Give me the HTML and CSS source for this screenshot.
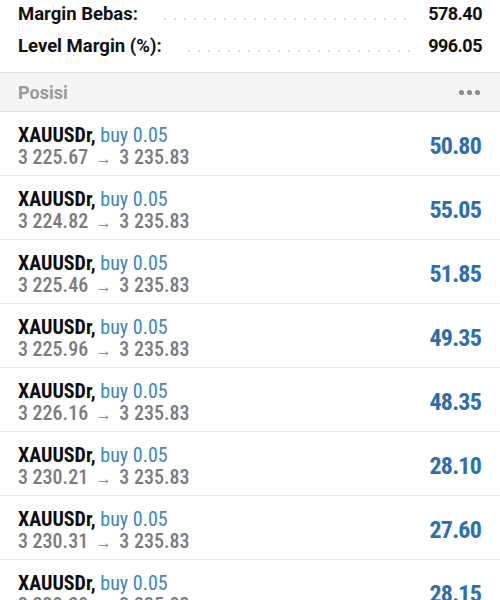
FILE: index.html
```html
<!DOCTYPE html>
<html lang="id">
  <head>
    <meta charset="utf-8" />
    <title>Posisi</title>
    <link rel="stylesheet" href="styles.css">
  </head>
  <body>
    <div class="summary">
      <div class="sum-row">
        <span class="sum-label">Margin Bebas:</span>
        <span class="sum-dots"></span>
        <span class="sum-value">578.40</span>
      </div>
      <div class="sum-row">
        <span class="sum-label">Level Margin (%):</span>
        <span class="sum-dots"></span>
        <span class="sum-value">996.05</span>
      </div>
    </div>

    <div class="section-head">
      <span class="section-title">Posisi</span>
      <span class="more"><i></i><i></i><i></i></span>
    </div>

    <div class="positions">
      <div class="pos">
        <div class="pos-info">
          <div class="pos-title"><b>XAUUSDr,</b> <span class="side">buy 0.05</span></div>
          <div class="pos-price">3 225.67 <span class="arrow">&rarr;</span> 3 235.83</div>
        </div>
        <div class="pos-profit">50.80</div>
      </div>
      <div class="pos">
        <div class="pos-info">
          <div class="pos-title"><b>XAUUSDr,</b> <span class="side">buy 0.05</span></div>
          <div class="pos-price">3 224.82 <span class="arrow">&rarr;</span> 3 235.83</div>
        </div>
        <div class="pos-profit">55.05</div>
      </div>
      <div class="pos">
        <div class="pos-info">
          <div class="pos-title"><b>XAUUSDr,</b> <span class="side">buy 0.05</span></div>
          <div class="pos-price">3 225.46 <span class="arrow">&rarr;</span> 3 235.83</div>
        </div>
        <div class="pos-profit">51.85</div>
      </div>
      <div class="pos">
        <div class="pos-info">
          <div class="pos-title"><b>XAUUSDr,</b> <span class="side">buy 0.05</span></div>
          <div class="pos-price">3 225.96 <span class="arrow">&rarr;</span> 3 235.83</div>
        </div>
        <div class="pos-profit">49.35</div>
      </div>
      <div class="pos">
        <div class="pos-info">
          <div class="pos-title"><b>XAUUSDr,</b> <span class="side">buy 0.05</span></div>
          <div class="pos-price">3 226.16 <span class="arrow">&rarr;</span> 3 235.83</div>
        </div>
        <div class="pos-profit">48.35</div>
      </div>
      <div class="pos">
        <div class="pos-info">
          <div class="pos-title"><b>XAUUSDr,</b> <span class="side">buy 0.05</span></div>
          <div class="pos-price">3 230.21 <span class="arrow">&rarr;</span> 3 235.83</div>
        </div>
        <div class="pos-profit">28.10</div>
      </div>
      <div class="pos">
        <div class="pos-info">
          <div class="pos-title"><b>XAUUSDr,</b> <span class="side">buy 0.05</span></div>
          <div class="pos-price">3 230.31 <span class="arrow">&rarr;</span> 3 235.83</div>
        </div>
        <div class="pos-profit">27.60</div>
      </div>
      <div class="pos">
        <div class="pos-info">
          <div class="pos-title"><b>XAUUSDr,</b> <span class="side">buy 0.05</span></div>
          <div class="pos-price">3 230.20 <span class="arrow">&rarr;</span> 3 235.83</div>
        </div>
        <div class="pos-profit">28.15</div>
      </div>
    </div>
  </body>
</html>
```

FILE: styles.css
```css
body {
  margin: 0;
  background: #ffffff;
  font-family: Roboto, "Liberation Sans", sans-serif;
  color: #111111;
  overflow: hidden;
}

/* account summary */
.summary {
  padding: 3px 18px 0 18px;
  height: 69px;
  border-bottom: 1px solid #e4e4e4;
}
.sum-row {
  display: flex;
  align-items: baseline;
  height: 32px;
}
.sum-label {
  font-size: 18.5px;
  font-weight: 700;
}
.sum-dots {
  flex: 1;
  height: 2px;
  margin: 0 18px 0 22px;
  background: radial-gradient(circle, #dcdcdc 0.8px, transparent 1.2px) 0 0 / 10px 2px repeat-x;
}
.sum-value {
  font-size: 18px;
  font-weight: 700;
  letter-spacing: -0.5px;
}

/* section header */
.section-head {
  display: flex;
  align-items: center;
  justify-content: space-between;
  height: 38px;
  padding: 0 20px 0 18px;
  background: #f5f5f5;
  border-bottom: 1px solid #e2e2e2;
}
.section-title {
  font-size: 18px;
  font-weight: 700;
  color: #9a9a9a;
}
.more {
  display: flex;
  gap: 3px;
}
.more i {
  width: 5px;
  height: 5px;
  border-radius: 50%;
  background: #8a8a8a;
}

/* position rows */
.pos {
  display: flex;
  align-items: center;
  justify-content: space-between;
  height: 63px;
  padding: 0 19px 0 18px;
  border-bottom: 1px solid #e8e8e8;
  font-family: "Roboto Condensed", Roboto, sans-serif;
}
.pos-info {
  padding-top: 6px;
}
.pos-title {
  font-size: 20px;
  line-height: 22px;
}
.pos-title b {
  font-weight: 700;
  color: #0d0d0d;
}
.side {
  color: #3f86c0;
}
.pos-price {
  font-size: 20px;
  line-height: 23px;
  font-weight: 500;
  color: #7b7b7b;
}
.arrow {
  font-size: 16px;
  margin: 0 3px;
}
.pos-profit {
  font-size: 24px;
  font-weight: 700;
  color: #2d6eae;
  letter-spacing: -0.8px;
  padding-top: 4px;
}
```
